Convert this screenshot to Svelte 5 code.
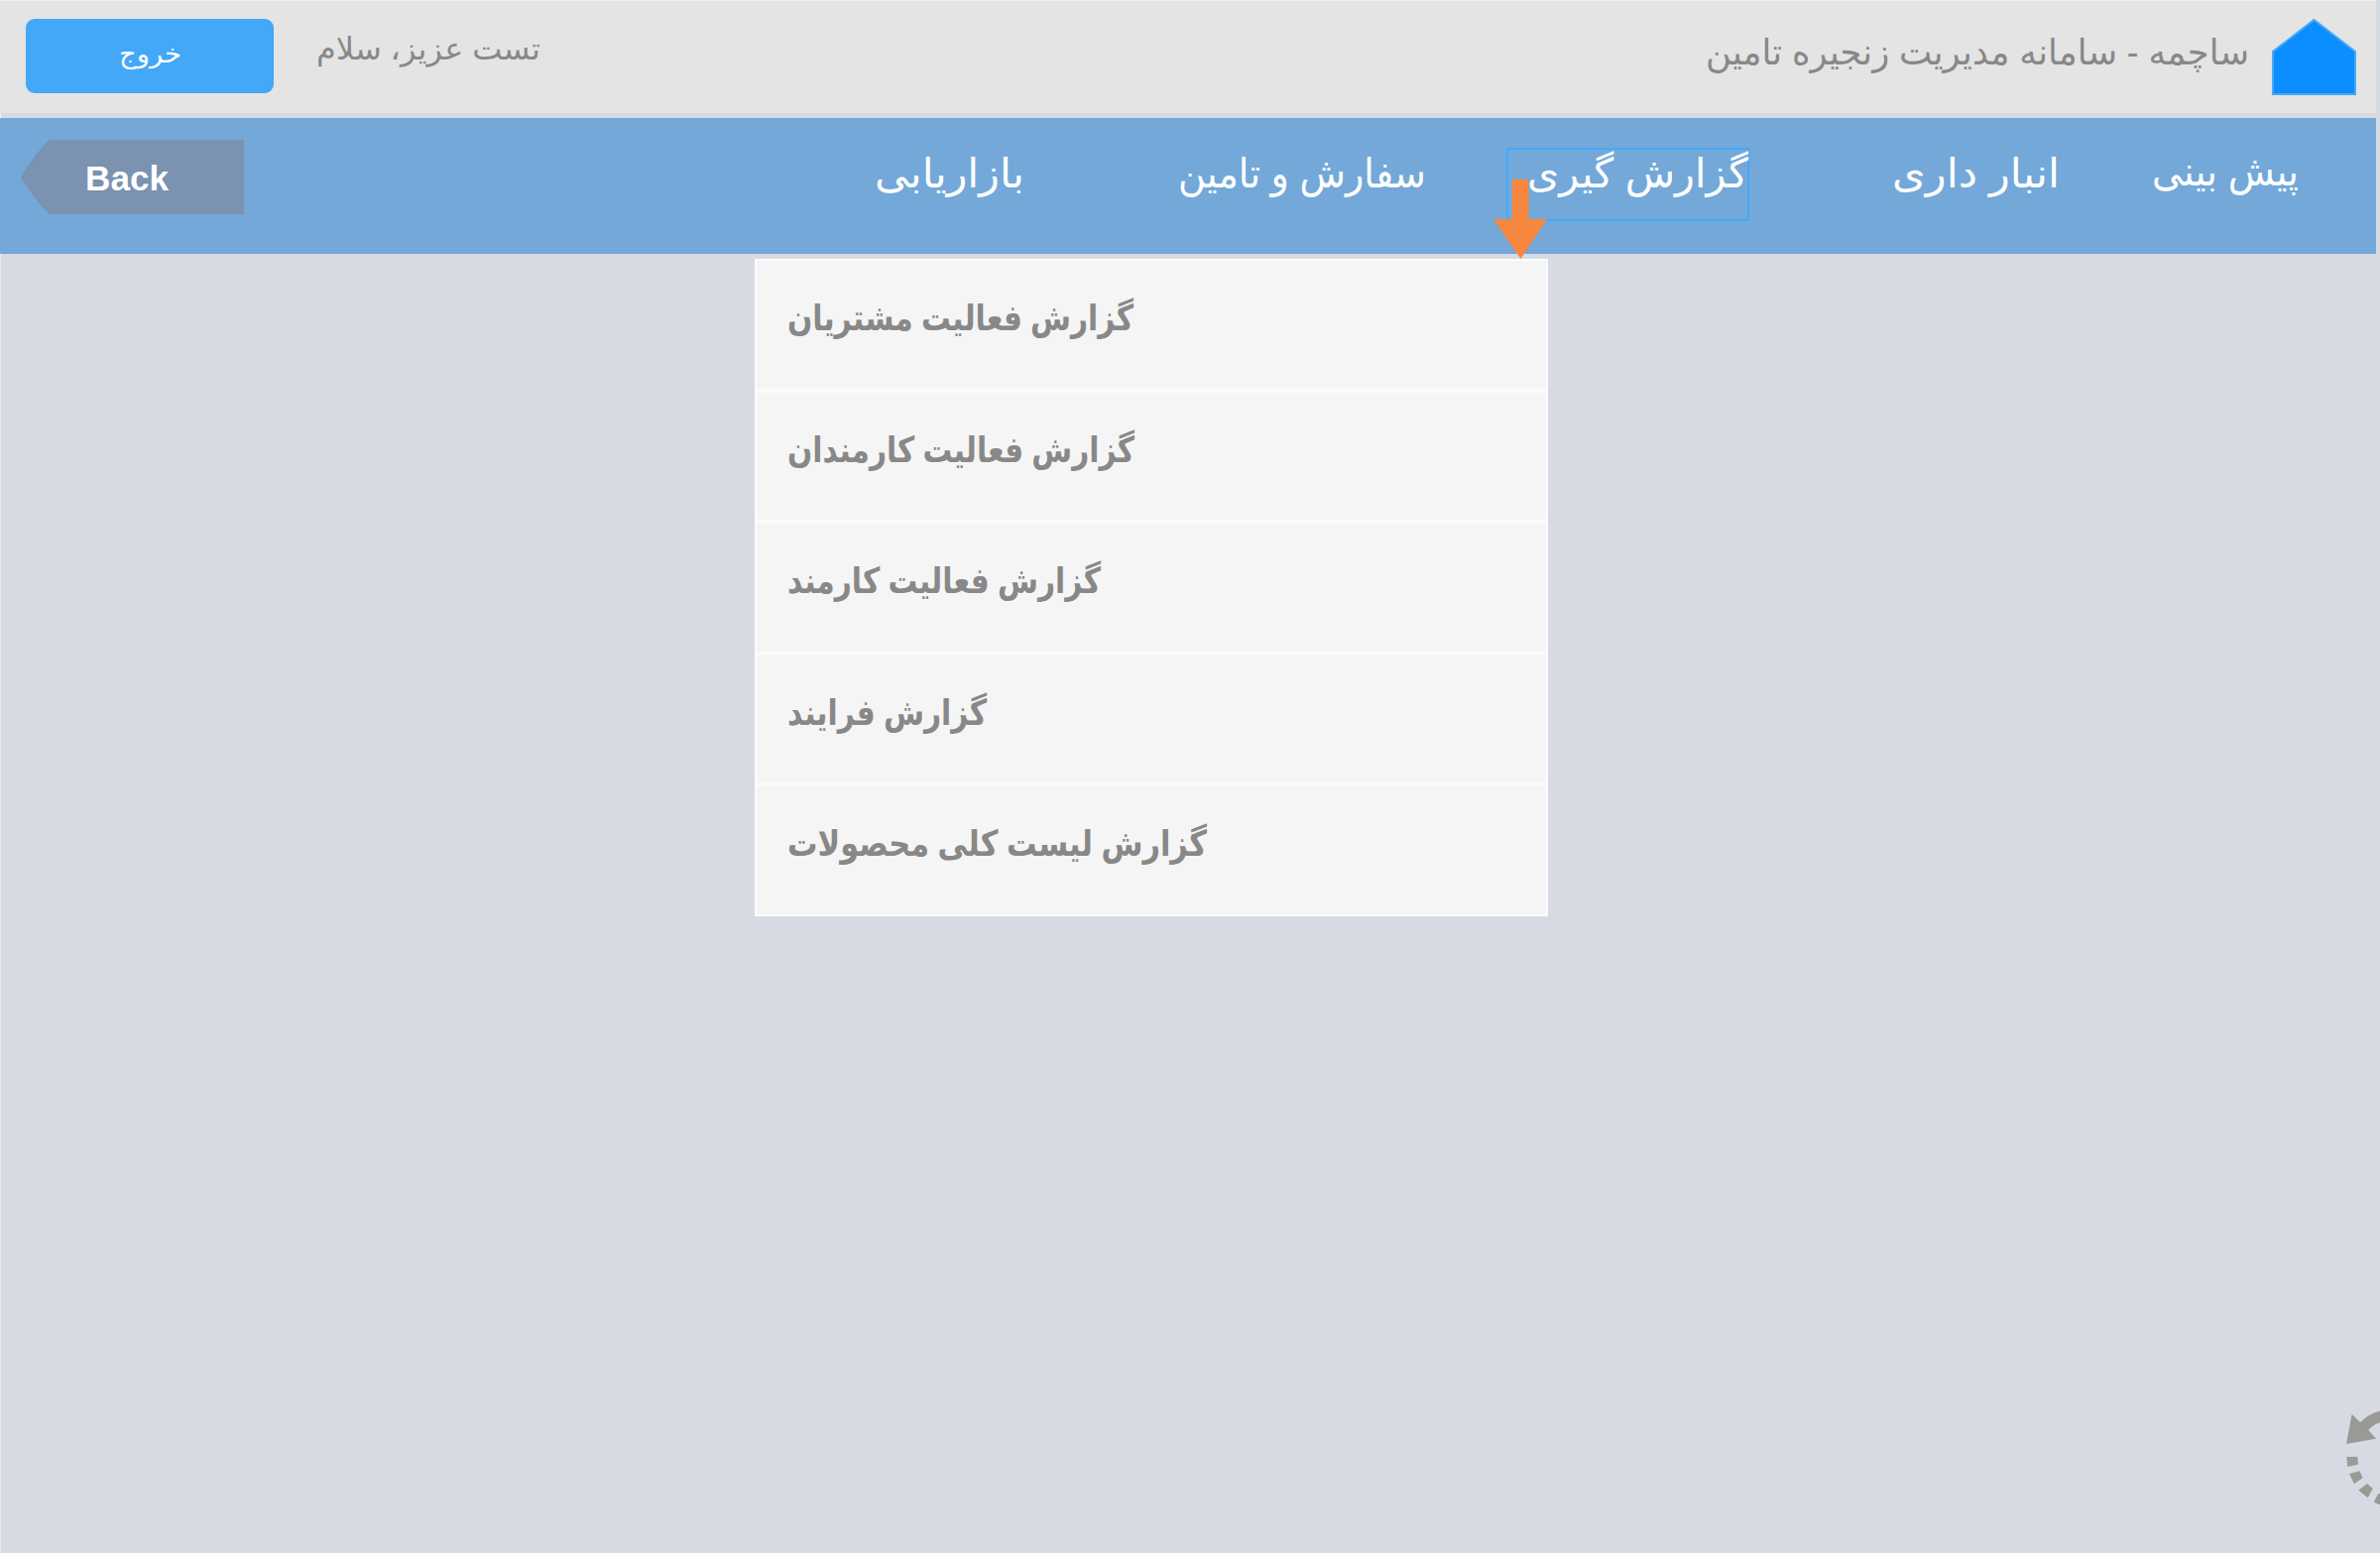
<script>
  const nav = [
    { text: 'بازاریابی', width: 151 },
    { text: 'سفارش و تامین', width: 250 },
    { text: 'گزارش گیری', width: 223, active: true },
    { text: 'انبار داری', width: 169 },
    { text: 'پیش بینی', width: 148, raised: true }
  ];
  const reports = [
    { text: 'گزارش فعالیت مشتریان', width: 349 },
    { text: 'گزارش فعالیت کارمندان', width: 350 },
    { text: 'گزارش فعالیت کارمند', width: 316 },
    { text: 'گزارش فرایند', width: 201 },
    { text: 'گزارش لیست کلی محصولات', width: 423 }
  ];
</script>

{#snippet label(text, width, baseline)}
  <svg class="label" {width} height="70" role="img" aria-label={text}>
    <text x={width / 2} y={baseline} text-anchor="middle" textLength={width} lengthAdjust="spacingAndGlyphs">{text}</text>
  </svg>
{/snippet}

<div class="page">
  <header>
    <button class="logout">{@render label('خروج', 63, 44)}</button>
    <div class="greeting">{@render label('تست عزیز، سلام', 226, 41)}</div>
    <div class="title">{@render label('ساچمه - سامانه مدیریت زنجیره تامین', 548, 46)}</div>
    <svg class="home" width="85" height="77" viewBox="0 0 85 77">
      <path d="M42.500 1 L84 33 V76 H1 V33 Z" fill="#0b8eff" stroke="#48a8f4" stroke-width="2" />
    </svg>
  </header>

  <nav>
    <div class="back-cell">
      <svg class="back" width="225" height="75" viewBox="0 0 225 75">
        <path d="M29 0 H225 V75 H29 C20 67 8 51 0 38 C8 24 20 8 29 0 Z" fill="#7b92b0" />
        <text x="65" y="50.500" textLength="84" lengthAdjust="spacingAndGlyphs">Back</text>
      </svg>
    </div>
    {#each nav as item}
      <div class="item" class:active={item.active} class:raised={item.raised}>
        {@render label(item.text, item.width, 38)}
      </div>
    {/each}
  </nav>

  <svg class="pointer" width="54" height="80" viewBox="0 0 54 80">
    <path d="M19 0 H35.500 V40 H54 L27.500 80 L0 40 H19 Z" fill="#f7863f" />
  </svg>

  <ul class="menu">
    {#each reports as report}
      <li>{@render label(report.text, report.width, 50)}</li>
    {/each}
  </ul>

  <svg class="refresh" width="60" height="166" viewBox="0 0 180 498" fill="#999996">
    <path d="M95 78 L120 103 Q146 76 180 68 V103 Q160 110 145 126 L168 152 L78 168 Z" />
    <path d="M79 207 H112 L114 230 L82 237 Z" />
    <path d="M87 259 L118 250 L128 271 L102 289 Z" />
    <path d="M115 308 L141 288 L158 304 L143 331 Z" />
    <path d="M175 318 L180 319 V352 L161 344 Z" />
  </svg>
</div>

<style>
  :global(body) {
    margin: 0;
    background: #d6dae2;
  }
  .page {
    position: relative;
    width: 2400px;
    height: 1566px;
    overflow: hidden;
    background: linear-gradient(to right, #ebedf0 1px, #d6dae2 1px);
    font-family: 'Liberation Sans', 'DejaVu Sans', sans-serif;
  }
  .label {
    display: block;
    flex: none;
    overflow: visible;
    fill: currentColor;
    direction: rtl;
  }
  header {
    box-sizing: border-box;
    display: flex;
    align-items: flex-start;
    width: 2396px;
    height: 114px;
    padding: 18px 20px 0 26px;
    background: #e4e4e4;
    border-top: 1px solid #ededed;
    color: #888;
  }
  .logout {
    display: flex;
    justify-content: center;
    box-sizing: border-box;
    width: 250px;
    height: 75px;
    padding: 0;
    border: 0;
    border-radius: 9px;
    background: #42a8f7;
    color: #fff;
    font: 26px 'Liberation Sans', 'DejaVu Sans', sans-serif;
  }
  .greeting {
    margin-left: 43px;
    font-size: 31px;
  }
  .title {
    margin-left: auto;
    margin-right: 23px;
    font-size: 36px;
  }
  .home {
    display: block;
  }
  nav {
    display: grid;
    grid-template-columns: 246px 787px 405px 326px 313px 241px;
    box-sizing: border-box;
    width: 2396px;
    height: 137px;
    margin-top: 5px;
    background: #73a8d9;
    color: #fff;
    font-size: 41px;
  }
  .back-cell {
    padding: 22px 0 0 21px;
  }
  .back {
    display: block;
    font-size: 35px;
    font-weight: bold;
    fill: #fff;
  }
  .item {
    justify-self: end;
    padding-top: 32px;
  }
  .item.raised {
    padding-top: 30px;
  }
  .item.active {
    box-sizing: border-box;
    width: 245px;
    height: 74px;
    margin-top: 30px;
    padding: 0 0 0 19px;
    border: 2px solid #42a9fa;
  }
  .pointer {
    position: absolute;
    left: 1506px;
    top: 181px;
    z-index: 2;
  }
  .menu {
    position: absolute;
    left: 761px;
    top: 261px;
    display: grid;
    grid-template-rows: repeat(5, 1fr);
    box-sizing: border-box;
    width: 800px;
    height: 663px;
    margin: 0;
    padding: 0;
    list-style: none;
    color: #888;
    font-size: 36px;
    font-weight: bold;
  }
  .menu li {
    box-sizing: border-box;
    padding: 20px 0 0 31px;
    background: #f5f5f5;
    border: 2px solid #fbfbfb;
  }
  .refresh {
    position: absolute;
    right: 0;
    top: 1400px;
  }
</style>
